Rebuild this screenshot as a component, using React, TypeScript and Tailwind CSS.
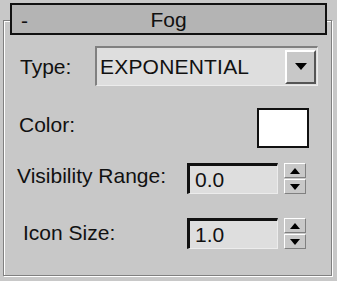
const font = { fontFamily: '"Liberation Sans", Arial, sans-serif' };

const Spinner = () => (
  <div className="flex flex-col w-[22px] h-[31px] gap-[1px]">
    <div className="flex-1 flex items-center justify-center bg-[#c8c8c8] border-t border-l border-t-white border-l-white border-b border-r border-b-[#808080] border-r-[#808080]">
      <svg width="10" height="6" viewBox="0 0 10 6"><path d="M5 0 L10 6 L0 6 Z" fill="#000" /></svg>
    </div>
    <div className="flex-1 flex items-center justify-center bg-[#c8c8c8] border-t border-l border-t-white border-l-white border-b border-r border-b-[#808080] border-r-[#808080]">
      <svg width="10" height="6" viewBox="0 0 10 6"><path d="M0 0 L10 0 L5 6 Z" fill="#000" /></svg>
    </div>
  </div>
);

const NumField = ({ value }: { value: string }) => (
  <div className="w-[91px] h-[31px] bg-[#dedede] border-t-[3px] border-l-[3px] border-t-[#111] border-l-[#111] border-r border-b border-r-[#ececec] border-b-[#ececec] flex items-center pl-[5px] text-[21px] leading-none text-[#111]">
    {value}
  </div>
);

export default function App() {
  return (
    <div className="w-[337px] h-[281px] bg-[#c8c8c8] pt-[3px] pl-[3px] text-[#111]" style={font}>
      <div className="relative z-10 ml-[7px] w-[317px] h-[32px] bg-[#b4b4b4] border-2 border-[#111] flex items-center">
        <span className="absolute left-[9px] top-[5px] text-[21px] leading-none">-</span>
        <span className="w-full text-center text-[21px] leading-none pt-[1px]">Fog</span>
      </div>
      <div className="mt-[-15px] w-[329px] h-[256px] border border-[#808080] shadow-[inset_1px_1px_0_#fff,1px_1px_0_#fff] text-[21px] leading-none">
        <div className="flex items-center justify-between pl-[16px] pr-[13px] mt-[25px] h-[40px]">
          <span>Type:</span>
          <div className="w-[223px] h-[40px] bg-[#dedede] border-t-2 border-l-2 border-t-[#808080] border-l-[#808080] border-r border-b border-r-[#ececec] border-b-[#ececec] flex items-center justify-between pl-[3px] pr-[1px]">
            <span className="tracking-[0.2px]">EXPONENTIAL</span>
            <div className="w-[31px] h-[34px] bg-[#c8c8c8] border-t-2 border-l-2 border-t-white border-l-white border-r-2 border-b-2 border-r-[#555] border-b-[#555] flex items-center justify-center">
              <svg width="12" height="7" viewBox="0 0 12 7"><path d="M0 0 L12 0 L6 7 Z" fill="#000" /></svg>
            </div>
          </div>
        </div>
        <div className="flex justify-between pl-[15px] pr-[22px] mt-[22px] h-[40px]">
          <span className="pt-[6px]">Color:</span>
          <div className="w-[52px] h-[40px] bg-white border-2 border-[#111]" />
        </div>
        <div className="flex items-center pl-[13px] pr-[25px] mt-[15px] h-[31px]">
          <span className="flex-1 mb-[6px]">Visibility Range:</span>
          <NumField value="0.0" />
          <div className="ml-[6px]"><Spinner /></div>
        </div>
        <div className="flex items-center pl-[19px] pr-[25px] mt-[24px] h-[31px]">
          <span className="flex-1 mb-[2px]">Icon Size:</span>
          <NumField value="1.0" />
          <div className="ml-[6px]"><Spinner /></div>
        </div>
      </div>
    </div>
  );
}
